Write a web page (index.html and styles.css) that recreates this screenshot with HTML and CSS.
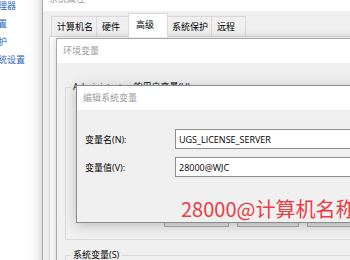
FILE: index.html
```html
<!DOCTYPE html>
<html lang="zh-CN">
<head>
    <meta charset="UTF-8">
    <title>编辑系统变量</title>
    <link rel="stylesheet" href="styles.css">
</head>
<body>

    <!-- Панель управления за окнами -->
    <ul class="cp-nav">
        <li>设备管理器</li>
        <li>远程设置</li>
        <li>系统保护</li>
        <li>高级系统设置</li>
    </ul>

    <!-- Окно "系统属性" -->
    <div class="win sysprops">
        <div class="titlebar">系统属性</div>
        <div class="win-body">
            <div class="tabs">
                <span class="tab">计算机名</span>
                <span class="tab">硬件</span>
                <span class="tab active">高级</span>
                <span class="tab">系统保护</span>
                <span class="tab">远程</span>
            </div>
            <div class="tab-page"></div>
        </div>
    </div>

    <!-- Окно "环境变量" -->
    <div class="win envvars">
        <div class="titlebar">环境变量</div>
        <div class="win-body">
            <fieldset class="group">
                <legend>Administrator 的用户变量(U)</legend>
                <div class="var-list"></div>
                <div class="btn-row">
                    <button class="btn-new">新建(N)...</button>
                    <button>编辑(E)...</button>
                    <button>删除(D)</button>
                </div>
            </fieldset>
            <fieldset class="group sys-group">
                <legend>系统变量(S)</legend>
            </fieldset>
        </div>
    </div>

    <!-- Диалог редактирования переменной -->
    <div class="win editvar">
        <div class="titlebar">编辑系统变量</div>
        <div class="win-body">
            <div class="field">
                <label for="var-name">变量名(N):</label>
                <input type="text" id="var-name" value="UGS_LICENSE_SERVER">
            </div>
            <div class="field">
                <label for="var-value">变量值(V):</label>
                <input type="text" id="var-value" value="28000@WJC">
            </div>
        </div>
    </div>

    <!-- Красная подпись поверх скриншота -->
    <div class="note">28000@计算机名称</div>

</body>
</html>
```

FILE: styles.css
```css
/* Базовые стили */
* {
    box-sizing: border-box;
}

body {
    margin: 0;
    width: 350px;
    height: 260px;
    overflow: hidden;
    position: relative;
    background-color: #fff;
    font-family: "Open Sans", "Noto Sans CJK SC", sans-serif;
    font-size: 9px;
    color: #000;
}

/* Ссылки панели управления */
.cp-nav {
    list-style: none;
    margin: -3px 0 0 -29px;
    padding: 0;
    color: #2f63b8;
    line-height: 18px;
}

/* Общие стили окон */
.win {
    position: absolute;
    background-color: #f0f0f0;
    border: 1px solid #a9a9a9;
    box-shadow: 0 0 12px rgba(0, 0, 0, 0.25);
}

.titlebar {
    background-color: #fff;
    color: #9b9b9b;
    padding-left: 6px;
    height: 24px;
    line-height: 24px;
}

/* Системные свойства */
.sysprops {
    left: 42px;
    top: -21px;
    width: 330px;
    height: 300px;
}

.sysprops .titlebar {
    height: 31px;
    line-height: 18px;
    padding-top: 10px;
}

.sysprops .win-body {
    padding: 5px 0 0 6px;
}

.tabs {
    display: flex;
    align-items: flex-end;
    padding-left: 2px;
    height: 20px;
}

.tab {
    height: 20px;
    line-height: 20px;
    min-width: 35px;
    padding: 0 3px 0 5px;
    margin-right: -1px;
    border: 1px solid #d9d9d9;
    border-bottom: none;
    background-color: #f0f0f0;
}

.tab.active {
    position: relative;
    z-index: 1;
    height: 24px;
    line-height: 22px;
    min-width: 40px;
    margin: 0 -1px -1px -2px;
    padding: 0 6px 0 7px;
    background-color: #fff;
}

.tab.active + .tab {
    margin-left: -1px;
}

.tab-page {
    height: 260px;
    border: 1px solid #d9d9d9;
    background-color: #fff;
}

/* Переменные среды */
.envvars {
    left: 56px;
    top: 38px;
    width: 330px;
    height: 240px;
    box-shadow: 0 0 10px rgba(0, 0, 0, 0.18);
}

.envvars .win-body {
    padding: 18px 0 0 8px;
}

.group {
    width: 313px;
    margin: 0;
    padding: 0 8px 12px 5px;
    border: 1px solid #dcdcdc;
}

.group legend {
    padding: 0 2px;
    line-height: 12px;
}

.var-list {
    height: 114px;
}

.btn-row {
    display: flex;
    justify-content: flex-end;
    gap: 8px;
}

.btn-row button {
    width: 62px;
    height: 20px;
    padding: 0;
    font: inherit;
    background-color: #e1e1e1;
    border: 1px solid #adadad;
}

.btn-row .btn-new {
    width: 65px;
}

.sys-group {
    margin-top: 9px;
    height: 40px;
}

/* Диалог редактирования */
.editvar {
    left: 76px;
    top: 85px;
    width: 300px;
    height: 138px;
    border-color: #8c8c8c;
    box-shadow: 0 2px 12px rgba(0, 0, 0, 0.22);
}

.editvar .win-body {
    padding: 19px 0 0 8px;
}

.field {
    display: flex;
    align-items: center;
    margin-bottom: 8px;
}

.field label {
    width: 90px;
}

.field input {
    width: 200px;
    height: 20px;
    padding: 0 3px;
    font: inherit;
    color: #000;
    background-color: #fff;
    border: 1px solid #8e8e8e;
    outline: none;
}

/* Подпись */
.note {
    position: absolute;
    left: 181px;
    top: 199px;
    font-family: "Noto Sans CJK SC", sans-serif;
    font-size: 20px;
    line-height: 20px;
    color: #eb3c44;
    white-space: nowrap;
}
```
